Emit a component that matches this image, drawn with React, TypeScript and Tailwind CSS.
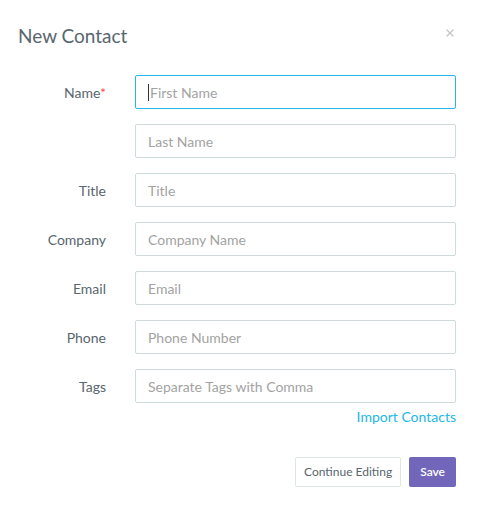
import { X } from 'lucide-react'

type Row = {
  label: string
  placeholder: string
  required?: boolean
  focused?: boolean
}

const rows: Row[] = [
  { label: 'Name', placeholder: 'First Name', required: true, focused: true },
  { label: '', placeholder: 'Last Name' },
  { label: 'Title', placeholder: 'Title' },
  { label: 'Company', placeholder: 'Company Name' },
  { label: 'Email', placeholder: 'Email' },
  { label: 'Phone', placeholder: 'Phone Number' },
  { label: 'Tags', placeholder: 'Separate Tags with Comma' },
]

function FieldRow({ label, placeholder, required, focused }: Row) {
  return (
    <div className="flex items-center">
      <label className="w-[106px] shrink-0 text-right text-[14px] text-[#58666e]">
        {label}
        {required && <span className="text-[#f05050]">*</span>}
      </label>
      <div
        className={`ml-[29px] flex h-[34px] w-[321px] items-center rounded-[2px] border bg-white px-3 ${
          focused ? 'border-[#23b7e5]' : 'border-[#cfdadd]'
        }`}
      >
        {focused && <span className="mr-px h-[17px] w-px bg-[#333]" />}
        <span className="text-[14px] text-[#a3a3a3]">{placeholder}</span>
      </div>
    </div>
  )
}

export default function App() {
  return (
    <div
      className="h-[506px] w-[477px] bg-white"
      style={{ fontFamily: 'Lato, "Open Sans", sans-serif' }}
    >
      <div className="flex items-center justify-between pl-[18px] pr-[21px] pt-[22px]">
        <h2 className="text-[19px] leading-[28px] text-[#58666e]">New Contact</h2>
        <X size={12} strokeWidth={2.5} className="-mt-[6px] text-[#c4c4c4]" />
      </div>
      <div className="mt-[25px] flex flex-col gap-[15px] pr-[21px]">
        {rows.map((r, i) => (
          <FieldRow key={i} {...r} />
        ))}
      </div>
      <div className="flex justify-end pr-[21px] pt-[3px]">
        <a className="text-[14px] text-[#23b7e5]">Import Contacts</a>
      </div>
      <div className="mt-[30px] flex justify-end gap-2 pr-[21px]">
        <button className="h-[30px] rounded-[2px] border border-[#dee5e7] bg-white px-[8px] text-[12px] text-[#58666e]">
          Continue Editing
        </button>
        <button className="h-[30px] rounded-[2px] bg-[#7266ba] px-[11px] text-[12px] font-semibold text-white">
          Save
        </button>
      </div>
    </div>
  )
}
